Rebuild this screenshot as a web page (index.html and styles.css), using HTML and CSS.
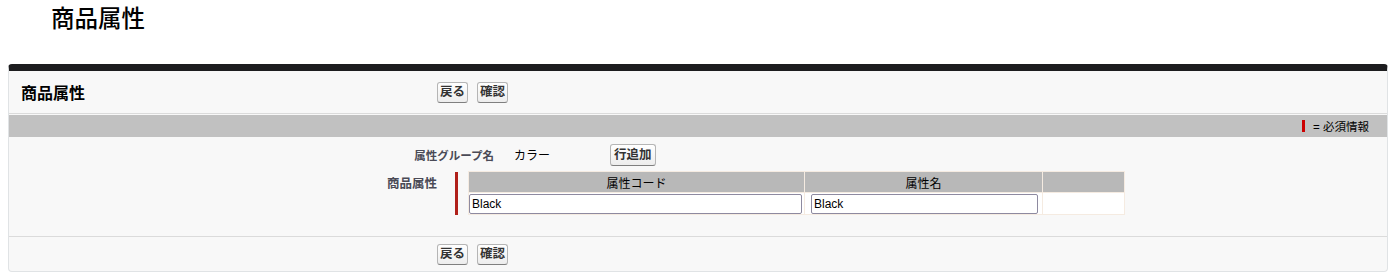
FILE: index.html
```html
<!DOCTYPE html>
<html lang="ja">
<head>
<meta charset="utf-8">
<title>商品属性</title>
<link rel="stylesheet" href="styles.css">
</head>
<body>
<h1 class="page-title">商品属性</h1>
<div class="block">
  <div class="block-header">
    <h2 class="block-title">商品属性</h2>
    <div class="btns">
      <button class="btn">戻る</button>
      <button class="btn">確認</button>
    </div>
  </div>
  <div class="band">
    <span class="req-legend"><span class="req-bar"></span>= 必須情報</span>
  </div>
  <div class="section">
    <div class="row row-group">
      <div class="label label-group">属性グループ名</div>
      <div class="value">カラー</div>
      <button class="btn btn-add">行追加</button>
    </div>
    <div class="row row-attr">
      <div class="label label-attr">商品属性</div>
      <div class="req-line"></div>
      <table class="grid">
        <thead>
          <tr>
            <th class="c1">属性コード</th>
            <th class="c2">属性名</th>
            <th class="c3"></th>
          </tr>
        </thead>
        <tbody>
          <tr>
            <td class="c1"><input class="inp inp1" type="text" value="Black"></td>
            <td class="c2"><input class="inp inp2" type="text" value="Black"></td>
            <td class="c3"></td>
          </tr>
        </tbody>
      </table>
    </div>
  </div>
  <div class="block-footer">
    <div class="btns">
      <button class="btn">戻る</button>
      <button class="btn">確認</button>
    </div>
  </div>
</div>
</body>
</html>
```

FILE: styles.css
```css
html, body {
  margin: 0;
  padding: 0;
  background: #ffffff;
}
body {
  font-family: "Liberation Sans", "Noto Sans CJK JP", sans-serif;
  font-size: 12px;
  color: #000;
}
.page-title {
  margin: 0;
  padding: 5px 0 0 51px;
  height: 64px;
  box-sizing: border-box;
  font-size: 23.5px;
  font-weight: 500;
  line-height: 29px;
  color: #000;
}
.block {
  margin: 0 7px 0 8px;
  background: #f8f8f8;
  border: 1px solid #e0e3e5;
  border-top: 7px solid #1d1d1f;
  border-radius: 4px;
  box-sizing: border-box;
}
.block-header {
  display: flex;
  align-items: center;
  height: 43px;
  border-bottom: 1px solid #dbdbdb;
  box-sizing: border-box;
}
.block-title {
  margin: 0;
  width: 428px;
  padding-left: 12px;
  box-sizing: border-box;
  font-size: 16px;
  font-weight: bold;
  color: #000;
}
.btns {
  display: flex;
  gap: 9px;
}
.btn {
  font-family: "Liberation Sans", "Noto Sans CJK JP", sans-serif;
  font-size: 12.5px;
  font-weight: bold;
  color: #333;
  height: 21px;
  padding: 0 2px;
  line-height: 18px;
  background: linear-gradient(#ffffff, #ededed);
  border: 1px solid #b5b5b5;
  border-bottom-color: #7f7f7f;
  border-radius: 3px;
  cursor: pointer;
}
.band {
  margin-top: 1px;
  height: 22px;
  background: #c1c1c1;
  display: flex;
  align-items: center;
  justify-content: flex-end;
  padding-right: 18px;
}
.req-legend {
  display: flex;
  align-items: center;
  font-size: 11.5px;
  color: #000;
}
.req-bar {
  display: inline-block;
  width: 3px;
  height: 12px;
  background: #c00;
  margin-right: 8px;
}
.section {
  padding: 5px 0 21px;
}
.row {
  display: flex;
}
.row-group {
  align-items: center;
  height: 25px;
}
.label {
  font-size: 11.5px;
  font-weight: bold;
  color: #4a4a56;
  text-align: right;
  box-sizing: border-box;
}
.label-group {
  width: 485px;
}
.value {
  margin-left: 20px;
  width: 96px;
}
.btn-add {
  padding: 0 3px;
  height: 22px;
}
.row-attr {
  margin-top: 5px;
  align-items: flex-start;
}
.label-attr {
  width: 428px;
  padding-top: 1px;
  font-size: 12.5px;
}
.req-line {
  width: 3px;
  height: 43px;
  background: #b0201a;
  margin: 0 10px 0 18px;
  flex: none;
}
.grid {
  border-collapse: collapse;
  border-spacing: 0;
  margin-top: -1px;
}
.grid th, .grid td {
  border: 1px solid #f5ebe1;
  padding: 0;
}
.grid th {
  background: #b8b8b8;
  height: 20px;
  font-weight: normal;
  font-size: 12px;
  color: #000;
  text-align: center;
}
.grid td {
  background: #ffffff;
  height: 21px;
  vertical-align: middle;
}
.grid .c1 { width: 335px; }
.grid .c2 { width: 237px; }
.grid .c3 { width: 81px; }
.inp {
  display: block;
  height: 20px;
  box-sizing: border-box;
  border: 1px solid #8e8aa0;
  border-radius: 2px;
  font-family: "Liberation Sans", "Noto Sans CJK JP", sans-serif;
  font-size: 12px;
  color: #000;
  padding: 0 2px;
  background: #fff;
}
.inp1 { width: 333px; margin-left: 0; }
.inp2 { width: 227px; margin-left: 6px; }
.block-footer {
  border-top: 1px solid #dbdbdb;
  height: 34px;
  display: flex;
  align-items: center;
  padding-left: 428px;
}
```
